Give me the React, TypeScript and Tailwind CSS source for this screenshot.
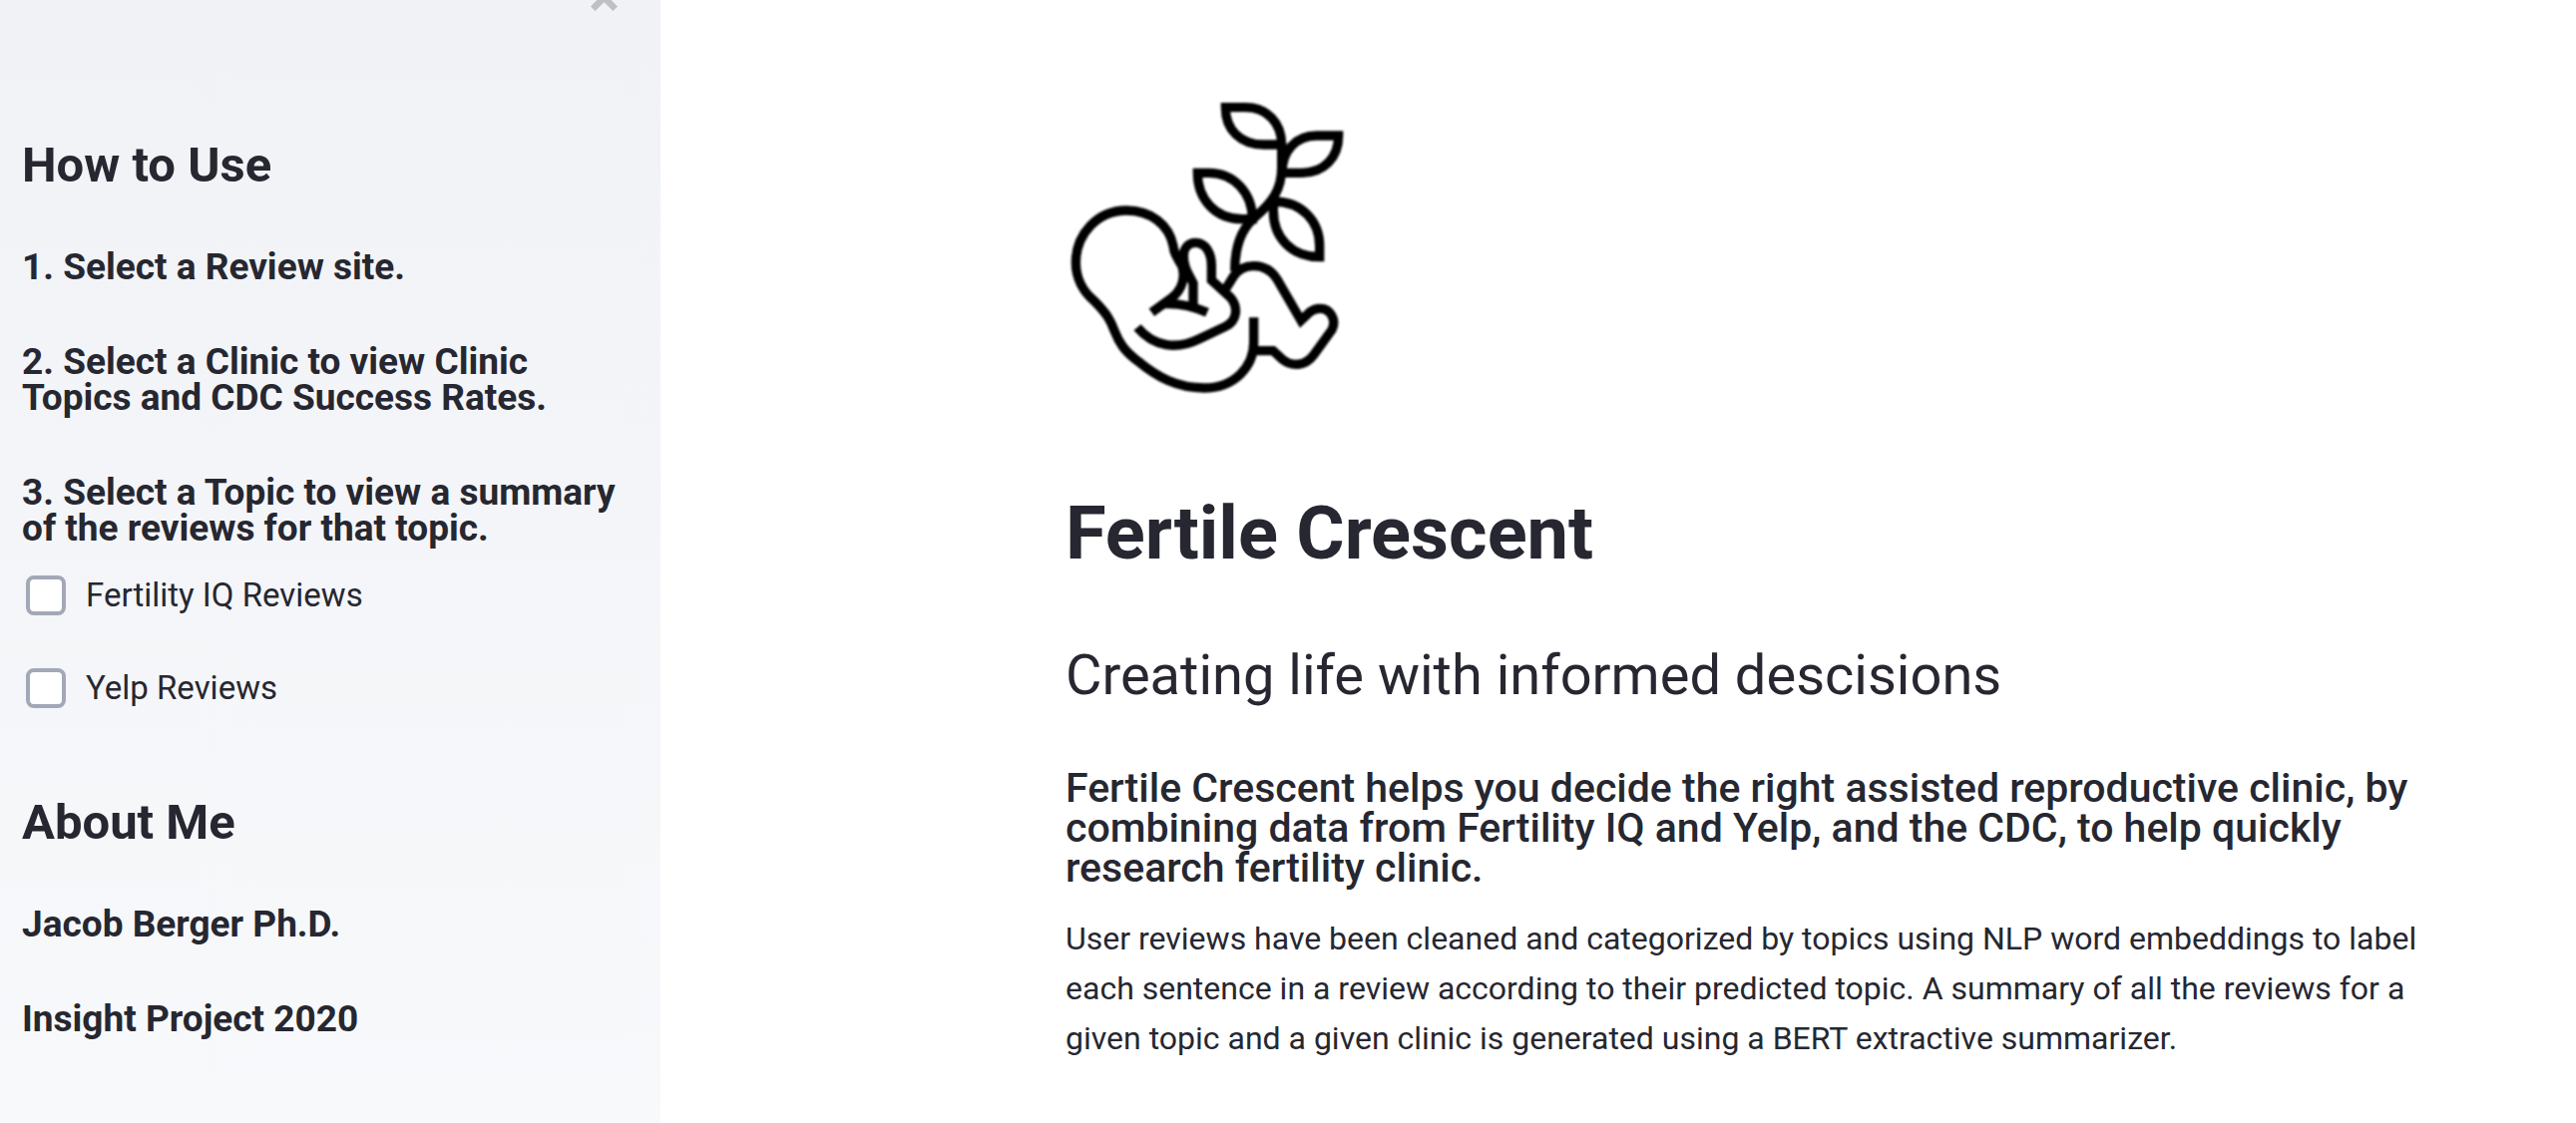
import { useState } from "react";

function BabyPlantLogo() {
  return (
    <svg
      role="img"
      aria-label="Fertile Crescent logo"
      viewBox="24 0 906 990"
      className="h-[330px] w-[302px] blur-[1px]"
      fill="none"
      stroke="#000"
      strokeWidth="28"
    >
      {/* Leaves */}
      <path d="M505 83H565C630 83 674 130 674 195H620C550 195 505 150 505 83Z" />
      <path d="M845 168H780C715 168 675 215 675 280H735C800 280 845 235 845 168Z" />
      <path d="M421 280H455C530 280 586 340 586 419H555C475 419 421 360 421 280Z" />
      <path d="M649 366C735 366 788 425 788 500V533C705 533 649 475 649 395Z" />
      {/* Stem */}
      <path d="M674 190V265C674 330 645 370 595 412C555 445 533 495 533 575" />
      {/* Head, back and hip */}
      <path d="M283 700L345 655C375 630 384 595 375 562C368 545 350 530 348 500C335 435 280 393 207 393C120 393 55 465 55 550C55 600 80 640 110 665C150 705 160 725 172 757C185 790 200 815 240 845C300 895 360 927 440 927C530 927 590 865 590 790V715" />
      {/* Legs */}
      <path d="M590 815H648L675 840C703 864 745 862 770 828L825 752C840 722 820 688 790 688C775 688 765 693 757 700L732 724L660 600C643 573 617 560 590 560C562 560 541 575 530 590L500 638" />
      {/* Arm and hand */}
      <path d="M408 680V612C395 585 379 565 379 530C379 505 395 490 415 490C445 490 463 520 463 560V603L520 655C545 685 540 725 505 742L425 780C360 812 290 805 240 745" />
      <path d="M320 674C360 672 405 680 450 700" />
    </svg>
  );
}

function ReviewCheckbox({ id, label }: { id: string; label: string }) {
  const [checked, setChecked] = useState(false);
  return (
    <div className="ml-1 flex h-10 items-center gap-5">
      <input
        id={id}
        type="checkbox"
        checked={checked}
        onChange={(e) => setChecked(e.target.checked)}
        className="size-10 shrink-0 appearance-none rounded-lg border-4 border-[#a3a8b8] bg-white checked:border-[#f63366] checked:bg-[#f63366]"
      />
      <label htmlFor={id} className="text-[33px] leading-10">
        {label}
      </label>
    </div>
  );
}

const steps = [
  "1. Select a Review site.",
  "2. Select a Clinic to view Clinic Topics and CDC Success Rates.",
  "3. Select a Topic to view a summary of the reviews for that topic.",
];

const about = ["Jacob Berger Ph.D.", "Insight Project 2020"];

export default function App() {
  return (
    <div className="flex min-h-screen overflow-hidden bg-white font-['Roboto',sans-serif] text-[#262730]">
      <aside className="w-[662px] shrink-0 bg-linear-to-b from-[#f0f2f6] to-[#f8f9fb] pr-[43px] pl-[22px]">
        <div className="flex h-[141px] items-start justify-end">
          <button type="button" aria-label="Close sidebar" className="-mt-4 text-[#bfc0c4]">
            <svg viewBox="0 0 27 27" className="size-[27px]" stroke="currentColor" strokeWidth="6.5">
              <path d="M2.3 2.3 24.7 24.7M24.7 2.3 2.3 24.7" />
            </svg>
          </button>
        </div>
        <section className="flex flex-col gap-[59px]">
          <h1 className="text-[49px] leading-[50px] font-bold">How to Use</h1>
          {steps.map((step) => (
            <h3 key={step} className="text-[37px] leading-9 font-bold">
              {step}
            </h3>
          ))}
        </section>
        <div className="mt-[29px] flex flex-col gap-[53px]">
          <ReviewCheckbox id="fertility-iq" label="Fertility IQ Reviews" />
          <ReviewCheckbox id="yelp" label="Yelp Reviews" />
        </div>
        <section className="mt-[90px] flex flex-col gap-[59px]">
          <h1 className="text-[49px] leading-[50px] font-bold">About Me</h1>
          {about.map((line) => (
            <h3 key={line} className="text-[37px] leading-9 font-bold">
              {line}
            </h3>
          ))}
        </section>
      </aside>
      <main className="min-w-0 flex-1 pt-20 pr-[118px] pl-[406px]">
        <BabyPlantLogo />
        <h1 className="mt-[89px] text-[74px] leading-[72px] font-bold">Fertile Crescent</h1>
        <h2 className="mt-[78px] text-[56px] leading-[56px]">Creating life with informed descisions</h2>
        <h3 className="mt-[65px] text-[41px] leading-10 font-medium">
          Fertile Crescent helps you decide the right assisted reproductive clinic, by combining data from
          Fertility IQ and Yelp, and the CDC, to help quickly research fertility clinic.
        </h3>
        <p className="mt-[26px] text-[32px] leading-[50px]">
          User reviews have been cleaned and categorized by topics using NLP word embeddings to label each
          sentence in a review according to their predicted topic. A summary of all the reviews for a given
          topic and a given clinic is generated using a BERT extractive summarizer.
        </p>
      </main>
    </div>
  );
}
